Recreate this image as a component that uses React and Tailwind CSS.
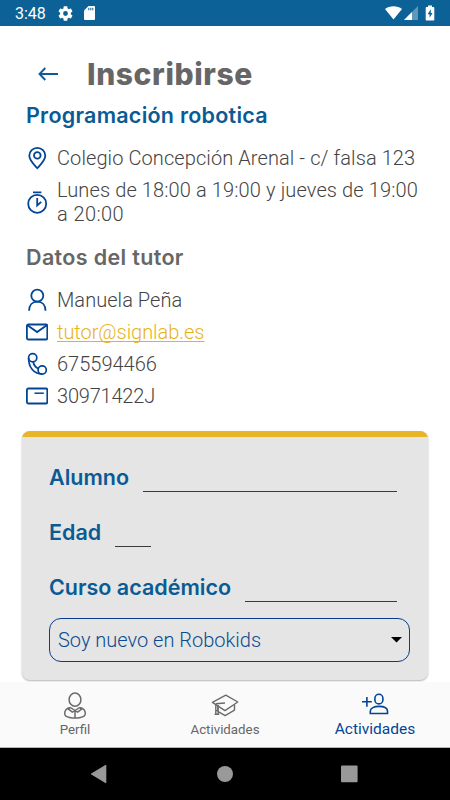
import React from "react";

const PinIcon = () => (
	<svg width="22" height="24" viewBox="0 0 22 24" fill="none" stroke="#024596" strokeWidth="1.8">
		<path d="M11.3 22.2C7 17.6 3.3 14.2 3.3 9.8a8 8 0 0 1 16 0c0 4.4-3.7 7.8-8 12.4Z" />
		<circle cx="11.3" cy="9.4" r="3.3" />
	</svg>
);

const TimerIcon = () => (
	<svg width="22" height="24" viewBox="0 0 22 24" fill="none" stroke="#024596" strokeWidth="1.8">
		<circle cx="11.2" cy="13.8" r="9" />
		<path d="M7 2.3h8.4M11.2 8v7.5l4-3.7" />
	</svg>
);

const UserIcon = () => (
	<svg width="22" height="24" viewBox="0 0 22 24" fill="none" stroke="#024596" strokeWidth="1.8">
		<circle cx="11.3" cy="7.7" r="6" />
		<path d="M3.1 22.8c0-5.6 3.2-9.1 8.2-9.1s8.2 3.5 8.2 9.1" />
	</svg>
);

const MailIcon = () => (
	<svg width="22" height="24" viewBox="0 0 22 24" fill="none" stroke="#024596" strokeWidth="1.8">
		<rect x="0.9" y="4.5" width="20.4" height="15" rx="1.5" />
		<path d="m1.5 5.2 9.6 6.9 9.6-6.9" />
	</svg>
);

const PhoneIcon = () => (
	<svg width="22" height="24" viewBox="0 0 22 24" fill="none" stroke="#024596" strokeWidth="1.7">
		<circle cx="6.7" cy="5.8" r="4.1" />
		<circle cx="16.2" cy="18" r="4.1" />
		<path d="M2.6 6C2.6 14.8 7.3 22.1 16.2 22.1M7.3 10c.5 3 2 5.2 5 6.6" />
	</svg>
);

const CardIcon = () => (
	<svg width="22" height="24" viewBox="0 0 22 24" fill="none" stroke="#024596" strokeWidth="1.8">
		<rect x="0.9" y="4.5" width="20.4" height="15" rx="1.5" />
		<path d="M8.5 9.2h9.3" strokeWidth="1.5" />
	</svg>
);

const ProfileIcon = () => (
	<svg width="24" height="28" viewBox="0 0 24 28" fill="none" stroke="#6b6b6b" strokeWidth="1.5">
		<ellipse cx="12" cy="7.7" rx="5.9" ry="6.6" />
		<path d="M7.5 15.5C4 16 1.7 18.4 1.7 21.5c0 1 .3 1.7.9 2.3 2.3 1.6 5.5 2.3 9.4 2.3s7.1-.7 9.4-2.3c.6-.6.9-1.3.9-2.3 0-3.1-2.3-5.5-5.8-6M7.5 15.5 12 18.6l4.5-3.1M7.5 15.5l-2 1.7 3.8 2.9L12 18.6l2.7 1.5 3.8-2.9-2-1.7M12 18.6v7.5" />
	</svg>
);

const CapIcon = () => (
	<svg width="28" height="26" viewBox="0 0 28 26" fill="none" stroke="#6b6b6b" strokeWidth="1.4" strokeLinejoin="round">
		<path d="M1.4 9.3 14.8 2.2 26.8 9 14 17.6Z" />
		<path d="M6.8 12.8v5.5l7.3 4.3 9.4-5.4v-5.3M14 10 4.8 10.8M4.8 11v9.8M7.2 12v9M3.6 21.3h4.6M4.8 17.6h2.4" />
	</svg>
);

const AddUserIcon = () => (
	<svg width="28" height="24" viewBox="0 0 28 24" fill="none" stroke="#024596" strokeWidth="1.6">
		<path d="M1 9.8h9.8M5.9 4.9v9.8" />
		<rect x="13.9" y="2.3" width="8" height="9.6" rx="4" />
		<path d="M9.3 21.5v-2.3c0-3.2 4-4.8 8.6-4.8s8.6 1.6 8.6 4.8v2.3Z" />
	</svg>
);

const activity = [
	{icon: PinIcon, lines: [["Colegio Concepción Arenal - c/ falsa 123", "tracking-[0.09px]"]]},
	{
		icon: TimerIcon,
		lines: [
			["Lunes de 18:00 a 19:00 y jueves de 19:00", "tracking-[0.12px]"],
			["a 20:00", "tracking-[0.4px]"],
		],
	},
];

const tutor = [
	{icon: UserIcon, lines: [["Manuela Peña", "tracking-[0.05px]"]]},
	{icon: MailIcon, lines: [["tutor@signlab.es", "tracking-[-0.05px]"]], link: true},
	{icon: PhoneIcon, lines: [["675594466", "tracking-[0px]"]]},
	{icon: CardIcon, lines: [["30971422J", "tracking-[-0.2px]"]]},
];

const fields = [
	{label: "Alumno", width: "w-[254px]", labelWidth: "w-[94px]"},
	{label: "Edad", width: "w-[36px]", labelWidth: "w-[66px]"},
	{label: "Curso académico", width: "w-[152px]", labelWidth: "w-[196px]"},
];

function InfoRow({icon: Icon, lines, link}) {
	return (
		<li className="flex min-h-8 items-center gap-[9px]">
			<Icon />
			<div className="pt-px text-[20px] leading-[23.5px] font-light whitespace-nowrap text-[#444]">
				{lines.map(([text, tracking]) => (
					<p key={text} className={tracking}>
						{link ? (
							<a href={`mailto:${text}`} className="text-[#e8b21c] underline decoration-1 underline-offset-2 [text-decoration-skip-ink:none]">
								{text}
							</a>
						) : (
							text
						)}
					</p>
				))}
			</div>
		</li>
	);
}

function StatusBar() {
	return (
		<div className="flex h-[26px] shrink-0 items-center justify-between bg-[#0c6297] px-[15px] text-white">
			<div className="flex items-center">
				<span className="w-[43px] pt-[2px] text-[16px] leading-none">3:48</span>
				<svg width="15" height="15" viewBox="2 2 20 20" fill="currentColor">
					<path d="M19.14 12.94c.04-.3.06-.61.06-.94s-.02-.64-.07-.94l2.03-1.58a.49.49 0 0 0 .12-.61l-1.92-3.32a.49.49 0 0 0-.59-.22l-2.39.96c-.5-.38-1.03-.7-1.62-.94l-.36-2.54a.48.48 0 0 0-.48-.41h-3.84a.48.48 0 0 0-.47.41l-.36 2.54c-.59.24-1.13.57-1.62.94l-2.39-.96a.49.49 0 0 0-.59.22L2.74 8.87a.48.48 0 0 0 .12.61l2.03 1.58c-.05.3-.09.63-.09.94s.02.64.07.94l-2.03 1.58a.49.49 0 0 0-.12.61l1.92 3.32c.12.22.37.29.59.22l2.39-.96c.5.38 1.03.7 1.62.94l.36 2.54c.05.24.24.41.48.41h3.84c.24 0 .44-.17.47-.41l.36-2.54c.59-.24 1.13-.56 1.62-.94l2.39.96c.22.08.47 0 .59-.22l1.92-3.32a.49.49 0 0 0-.12-.61l-2.01-1.58ZM12 15.2a3.2 3.2 0 1 1 0-6.4 3.2 3.2 0 0 1 0 6.4Z" />
				</svg>
				<svg className="ml-[11px]" width="11" height="14" viewBox="0 0 11 14">
					<path fill="#fff" d="M4.5 0H10a1 1 0 0 1 1 1v12a1 1 0 0 1-1 1H1a1 1 0 0 1-1-1V4.5Z" />
					<path stroke="#0c6297" strokeWidth="1" d="M4.8 1.8v2.5M6.8 1.8v2.5M8.8 1.8v2.5" />
				</svg>
			</div>
			<div className="flex items-center">
				<svg width="17" height="14" viewBox="0 0 17 14" fill="#fff">
					<path d="M0 3C4.5-.8 12.5-.8 17 3L8.5 13.5Z" />
				</svg>
				<svg className="ml-[2px]" width="14" height="14" viewBox="0 0 14 14" fill="#fff">
					<path opacity=".35" d="M14 0v14H0Z" />
					<path d="M8 6v8H0Z" />
				</svg>
				<svg className="ml-[7px]" width="10" height="16" viewBox="0 0 10 16">
					<path fill="#fff" d="M3 .5h4V2h1.5c.4 0 .8.3.8.8v11.9c0 .4-.4.8-.8.8h-7a.8.8 0 0 1-.8-.8V2.8c0-.5.4-.8.8-.8H3Z" />
					<path fill="#0c6297" d="M5.8 4.3 2.6 9.2h2v3.6l3-4.9h-1.8Z" />
				</svg>
			</div>
		</div>
	);
}

function BottomNav() {
	return (
		<nav className="grid h-[66px] shrink-0 grid-cols-3 border-b border-[#b5b5b5] bg-[#fafafa] text-[13.3px] text-[#666]">
			<div className="flex flex-col items-center pt-[10px]">
				<ProfileIcon />
				<span className="mt-[2px] leading-4">Perfil</span>
			</div>
			<div className="flex flex-col items-center pt-[11px]">
				<CapIcon />
				<span className="mt-[3px] leading-4">Actividades</span>
			</div>
			<div className="flex flex-col items-center pt-[10px] text-[#024596]">
				<AddUserIcon />
				<span className="mt-[5px] text-[15.5px] leading-4">Actividades</span>
			</div>
		</nav>
	);
}

function SystemBar() {
	return (
		<div className="flex h-[52px] shrink-0 items-center bg-black pl-[91px]">
			<svg width="267" height="18" viewBox="0 0 267 18" fill="#999">
				<path d="M15.3.2v17.6a.6.6 0 0 1-.9.2L.3 9.6a.7.7 0 0 1 0-1.2L14.4 0a.6.6 0 0 1 .9.2Z" />
				<circle cx="134" cy="9" r="8" />
				<rect x="250" y=".6" width="16.6" height="16.6" rx="1" />
			</svg>
		</div>
	);
}

export default function App() {
	return (
		<div className="flex h-[800px] w-[450px] flex-col overflow-hidden bg-white font-['Roboto',sans-serif]">
			<StatusBar />
			<main className="flex-1 overflow-hidden">
				<header className="flex h-[76px] items-center pt-[19px] pl-[38px]">
					<svg width="21" height="14" viewBox="0 0 21 14" fill="none" stroke="#0c5c98" strokeWidth="1.9">
						<path d="M20 7H1.8M7.3 1 1.5 7l5.8 6" />
					</svg>
					<h1 className="ml-[28px] font-['Inter',sans-serif] text-[30px] leading-none font-extrabold tracking-[0.6px] text-[#666]">
						Inscribirse
					</h1>
				</header>
				<section className="pl-[26px]">
					<h2 className="h-[40px] font-['Inter',sans-serif] text-[21.5px] leading-[26px] font-semibold tracking-[0.25px] text-[#0a5b94]">
						Programación robotica
					</h2>
					<ul className="flex flex-col gap-1">
						{activity.map((row) => (
							<InfoRow key={row.lines[0][0]} {...row} />
						))}
					</ul>
					<h2 className="mt-[16px] h-[42px] font-['Inter',sans-serif] text-[21.5px] leading-[30px] font-semibold tracking-[0.35px] text-[#666]">
						Datos del tutor
					</h2>
					<ul>
						{tutor.map((row) => (
							<InfoRow key={row.lines[0][0]} {...row} />
						))}
					</ul>
				</section>
				<form className="mx-[22px] mt-[19px] h-[249px] overflow-hidden rounded-[8px] bg-[#e5e5e5] shadow-[0_1px_2px_rgba(0,0,0,0.3)]">
					<div className="h-[5.5px] bg-[#e8b428]" />
					<div className="pt-[13.5px] pl-[27px]">
						{fields.map((field) => (
							<label key={field.label} className="flex h-[55px] items-center">
								<span className={`${field.labelWidth} font-['Inter',sans-serif] text-[21.5px] font-semibold whitespace-nowrap text-[#0a5b94]`}>
									{field.label}
								</span>
								<input className={`${field.width} h-[29px] border-b border-[#3a3a3a] bg-transparent outline-none`} />
							</label>
						))}
						<div className="mt-[3px] flex h-[44px] w-[361px] items-center justify-between rounded-[12px] border border-[#0a3c8c] pr-[7px] pl-[8px]">
							<span className="text-[20px] font-light text-[#0b4a90]">Soy nuevo en Robokids</span>
							<svg width="11" height="6" viewBox="0 0 11 6">
								<path d="M0 0h11L5.5 5.5Z" />
							</svg>
						</div>
					</div>
				</form>
			</main>
			<BottomNav />
			<SystemBar />
		</div>
	);
}
